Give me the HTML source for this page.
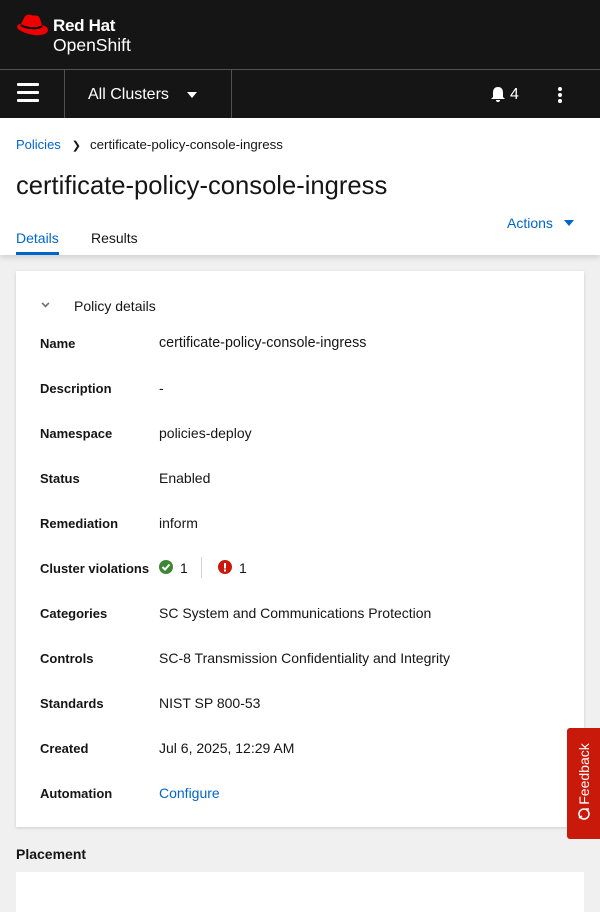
<!DOCTYPE html>
<html><head><style>
*{margin:0;padding:0;box-sizing:border-box}
body{width:600px;height:900px;overflow:hidden;background:#f0f0f0;font-family:"Liberation Sans",sans-serif;color:#151515;position:relative}
.abs{position:absolute}
.hdr{left:0;top:0;width:600px;height:69px;background:#151515}
.nav{left:0;top:69px;width:600px;height:49px;background:#151515;border-top:1px solid #4f5255}
.top{left:0;top:118px;width:600px;height:137px;background:#fff;box-shadow:0 3px 5px rgba(0,0,0,.12)}
.card{left:16px;top:271px;width:568px;height:556px;background:#fff;box-shadow:0 1px 3px rgba(0,0,0,.15)}
.lbl{left:40px;font-size:13px;font-weight:bold;position:absolute}
.val{left:159px;font-size:14px;position:absolute}
</style></head><body>
<div class="abs hdr">
<svg class="abs" style="left:15px;top:14px" width="36" height="26" viewBox="0 0 36 26"><path d="M9 4 C10 1 13 0 16 1 C19 2 21 1 23 2 C25 3 26 8 27 11 C30 12 33 13 33 16 C33 20 26 22 19 21 C11 20 2 16 2 13 C2 11 4 10 6 10 Z" fill="#e00"/><path d="M6 10 C10 13 22 15 27 11 L27.5 13 C22 17 10 15 5.5 12 Z" fill="#000"/></svg>
<div class="abs" style="left:53px;top:16px;color:#fff;font-weight:bold;font-size:17px;letter-spacing:-.3px">Red Hat</div>
<div class="abs" style="left:53px;top:35px;color:#fff;font-size:17.5px">OpenShift</div>
</div>
<div class="abs nav">
<div class="abs" style="left:17px;top:13px;width:22px;height:3px;background:#fff;border-radius:1px;box-shadow:0 8px 0 #fff,0 16px 0 #fff"></div>
<div class="abs" style="left:64px;top:0;width:1px;height:48px;background:#4f5255"></div>
<div class="abs" style="left:231px;top:0;width:1px;height:48px;background:#4f5255"></div>
<div class="abs" style="left:88px;top:16px;color:#fff;font-size:16px">All Clusters</div>
<div class="abs" style="left:187px;top:22px;border:5px solid transparent;border-top:6px solid #fff;border-bottom:0"></div>
<svg class="abs" style="left:490px;top:16px" width="16" height="17" viewBox="0 0 16 17"><path d="M8 1 C4 1 3 4 3 7 L3 11 L1 13 L15 13 L13 11 L13 7 C13 4 12 1 8 1Z M6 14 A2 2 0 0 0 10 14Z" fill="#fff"/></svg>
<div class="abs" style="left:510px;top:16px;color:#fff;font-size:16px">4</div>
<div class="abs" style="left:558px;top:17px;width:4px;height:4px;border-radius:2px;background:#fff;box-shadow:0 6px 0 #fff,0 12px 0 #fff"></div>
</div>
<div class="abs top">
<div class="abs" style="left:16px;top:19px;font-size:13px"><span style="color:#0066cc">Policies</span><span style="margin:0 9px 0 11px;font-size:11px">&#x276F;</span><span style="font-size:13.3px">certificate-policy-console-ingress</span></div>
<div class="abs" style="left:16px;top:54px;font-size:25.6px">certificate-policy-console-ingress</div>
<div class="abs" style="left:507px;top:97px;font-size:14px;color:#0066cc">Actions</div>
<div class="abs" style="left:564px;top:102px;border:5px solid transparent;border-top:6px solid #0066cc;border-bottom:0"></div>
<div class="abs" style="left:16px;top:112px;font-size:14px;color:#0066cc">Details</div>
<div class="abs" style="left:16px;top:134px;width:43px;height:3px;background:#0066cc"></div>
<div class="abs" style="left:91px;top:112px;font-size:14px">Results</div>
</div>
<div class="abs card"></div>
<div class="abs" style="left:42px;top:300px;width:7px;height:7px;border-right:2px solid #6a6e73;border-bottom:2px solid #6a6e73;transform:rotate(45deg) scale(.8)"></div>
<div class="abs" style="left:74px;top:298px;font-size:14px">Policy details</div>
<div class="lbl" style="top:336px">Name</div><div class="val" style="top:335px;font-size:14.3px">certificate-policy-console-ingress</div>
<div class="lbl" style="top:381px">Description</div><div class="val" style="top:380px">-</div>
<div class="lbl" style="top:426px">Namespace</div><div class="val" style="top:425px">policies-deploy</div>
<div class="lbl" style="top:471px">Status</div><div class="val" style="top:470px">Enabled</div>
<div class="lbl" style="top:516px">Remediation</div><div class="val" style="top:515px">inform</div>
<div class="lbl" style="top:561px">Cluster violations</div>
<svg class="abs" style="left:159px;top:560px" width="14" height="14"><circle cx="7" cy="7" r="7" fill="#3e8635"/><path d="M3.5 7 L6 9.5 L10.5 4.5" stroke="#fff" stroke-width="2" fill="none"/></svg>
<div class="val" style="left:180px;top:560px">1</div>
<div class="abs" style="left:201px;top:557px;width:1px;height:21px;background:#d2d2d2"></div>
<svg class="abs" style="left:218px;top:560px" width="14" height="14"><circle cx="7" cy="7" r="7" fill="#c9190b"/><rect x="6" y="3" width="2" height="5.5" fill="#fff"/><rect x="6" y="9.5" width="2" height="2" fill="#fff"/></svg>
<div class="val" style="left:239px;top:560px">1</div>
<div class="lbl" style="top:606px">Categories</div><div class="val" style="top:605px">SC System and Communications Protection</div>
<div class="lbl" style="top:651px">Controls</div><div class="val" style="top:650px">SC-8 Transmission Confidentiality and Integrity</div>
<div class="lbl" style="top:696px">Standards</div><div class="val" style="top:695px">NIST SP 800-53</div>
<div class="lbl" style="top:741px">Created</div><div class="val" style="top:740px">Jul 6, 2025, 12:29 AM</div>
<div class="lbl" style="top:786px">Automation</div><div class="val" style="top:785px;color:#0066cc">Configure</div>
<div class="abs" style="left:16px;top:846px;font-size:14px;font-weight:bold">Placement</div>
<div class="abs" style="left:16px;top:872px;width:568px;height:40px;background:#fff"></div>
<div class="abs" style="left:567px;top:728px;width:33px;height:111px;background:#c9190b;border-radius:3px 0 0 3px"></div>
<div class="abs" style="left:584px;top:774px;transform:translate(-50%,-50%) rotate(-90deg);color:#fff;font-size:14px;white-space:nowrap">Feedback</div>
<svg class="abs" style="left:577px;top:807px" width="14" height="14" viewBox="0 0 14 14"><circle cx="7" cy="7" r="5" stroke="#fff" stroke-width="1.5" fill="none"/><path d="M2 11 L5 9 M9 2 L12 2" stroke="#fff" stroke-width="1.5"/></svg>
</body></html>
